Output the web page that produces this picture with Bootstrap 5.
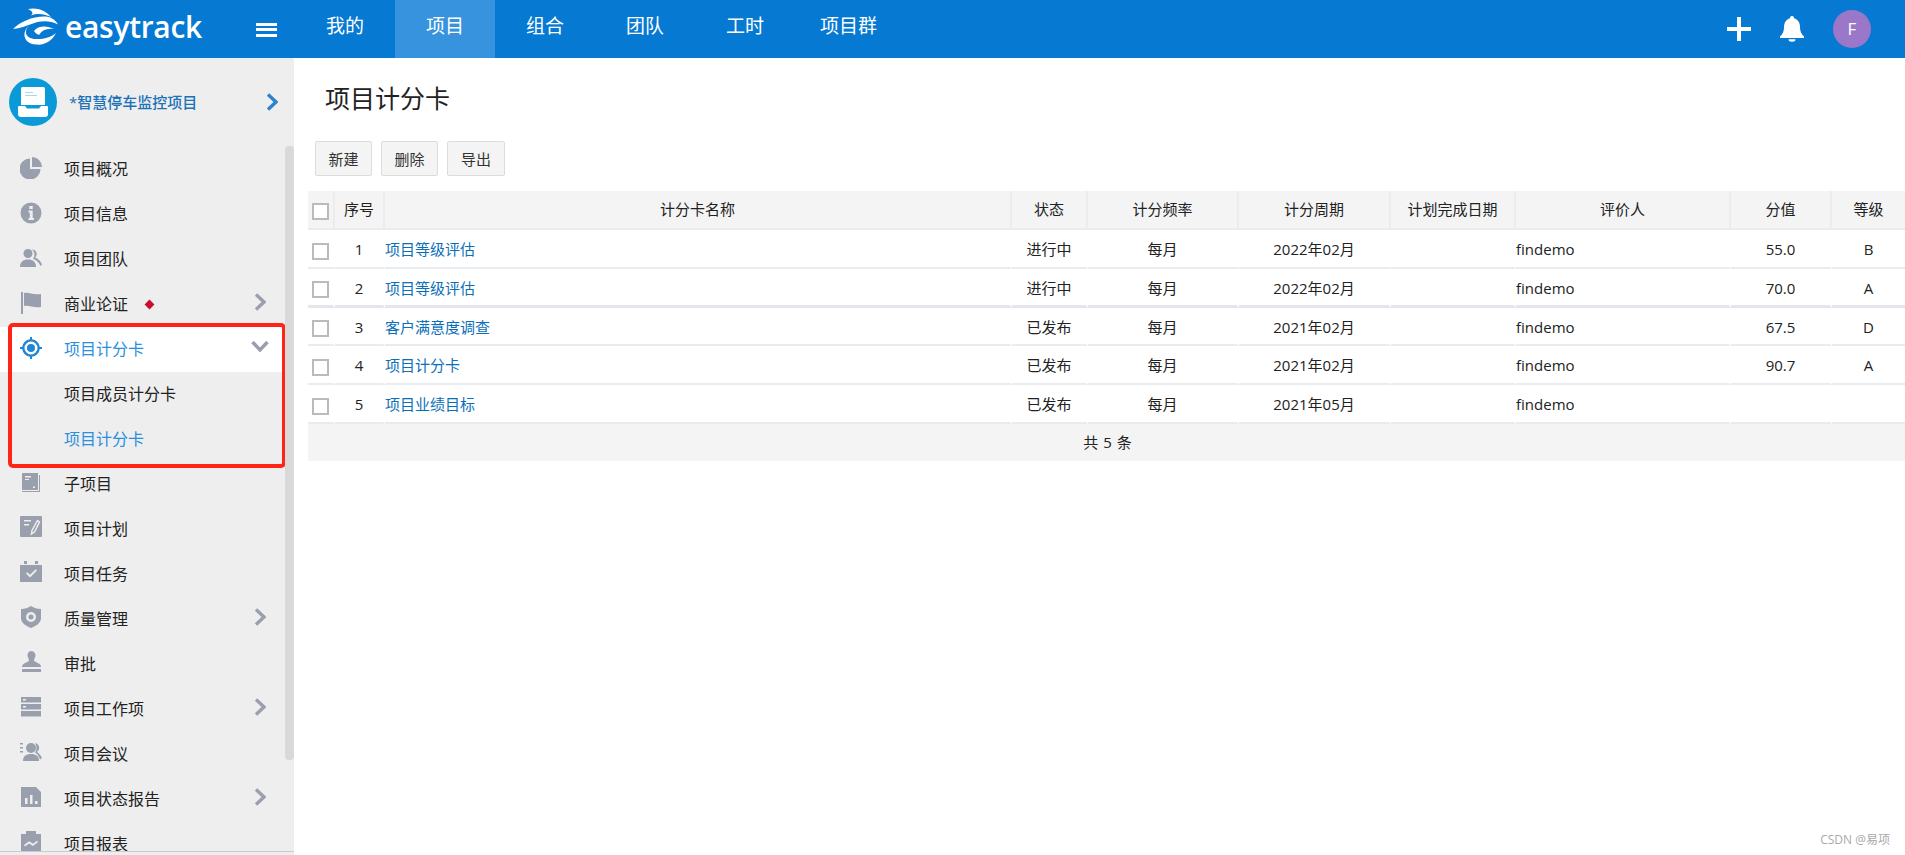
<!DOCTYPE html>
<html lang="zh-CN">
<head>
<meta charset="utf-8">
<title>项目计分卡</title>
<link href="https://cdn.jsdelivr.net/npm/bootstrap@5.3.0/dist/css/bootstrap.min.css" rel="stylesheet">
<style>
html,body{height:855px;overflow:hidden}
body{font-family:"Open Sans","Noto Sans CJK SC",sans-serif;color:#222;background:#fff;font-size:15px}
.et-top{height:58px;background:#0679d3}
.et-logo{width:256px;height:58px;color:#fff}
.et-word{font-family:"Open Sans",sans-serif;font-size:30px;font-weight:600;letter-spacing:-.3px;line-height:58px;margin-left:1px;margin-top:-5px}
.et-burger{width:21px;height:14px;border-top:3px solid #fff;border-bottom:3px solid #fff;position:relative;margin-right:18px;margin-top:1px}
.et-burger::after{content:"";position:absolute;left:0;right:0;top:2.5px;height:3px;background:#fff}
.et-nav a{display:block;width:100px;height:58px;line-height:53px;text-align:center;color:#fff;font-size:19px;text-decoration:none}
.et-nav a.on{background:#3793dd}
.et-nav li:last-child a{width:107px}
.et-plus{width:24px;height:24px;fill:#fff}
.et-bell{width:24px;height:26px;fill:#fff;margin-left:29px}
.et-ava{width:38px;height:38px;border-radius:50%;background:#9b77c9;color:#fff;font-size:17px;margin:0 34px 0 29px}
.et-main{height:797px}
.et-side{width:294px;background:#eee;padding-bottom:3px;position:relative}
.et-menu{overflow:hidden;border-bottom:1px solid #c5ccd5;flex:1 1 auto;min-height:0}
.et-proj{height:89px;padding-left:9px}
.et-proj-c{width:48px;height:48px;border-radius:50%;background:#0a9ad8;margin-top:-2px}
.et-proj-t{font-size:15px;font-weight:500;color:#1a72b8;margin-left:12px;margin-top:-1px;width:197px}
.et-row{height:44.95px;padding-left:20px;padding-right:28px;color:#222;font-size:16px;text-decoration:none}
.et-row svg.ic{width:22px;height:22px;fill:#9a9fae;margin-right:22px;flex:none;margin-top:-3px}
.et-row.sub{padding-left:64px}
.et-row.act{background:#fff;color:#2a8fdc}
.et-row.act svg.ic{fill:#1f86d8}
.et-row.cur{color:#2a8fdc}
.et-chev{width:12px;height:18px;fill:none;stroke:#9a9fae;stroke-width:3.4;margin-left:auto;margin-top:-4px}
.et-chev.pj{stroke:#2e84cc;margin-left:0;margin-top:-2px}
.et-chevd{width:18px;height:12px;fill:none;stroke:#9a9fae;stroke-width:3.4;margin-left:auto;margin-right:-3px;margin-top:-6px}
.et-dia{width:7px;height:7px;background:#c8102e;transform:rotate(45deg);margin-left:18px}
.et-group{position:relative}
.et-redbox{position:absolute;left:8px;right:8px;top:-4px;bottom:-6px;border:4px solid #ff2415;border-radius:5px;pointer-events:none}
.et-thumb{position:absolute;left:285px;top:88px;width:9px;height:614px;border-radius:4px;background:#d9d9d9}
.et-body{min-width:0;padding-left:14px;position:relative}
.et-title{font-size:25px;font-weight:400;color:#222;margin:0;padding:23px 0 0 17px;height:83px;line-height:34px}
.et-btns{padding-left:7px;gap:9px;height:50px}
.et-btn{height:35px;width:57px;padding:0;font-size:15px;line-height:32px;background:#f4f4f4;border:1px solid #dcdcdc;border-radius:2px;color:#333}
.et-btn.wide{width:58px}
.et-t{table-layout:fixed;width:1597px;margin:0;border-collapse:separate;border-spacing:0;font-size:15px;--bs-table-bg:transparent}
.et-t th,.et-t td{padding:0;vertical-align:middle;text-align:center;white-space:nowrap;border-bottom:2px solid #eaebef;color:#222;box-shadow:none}
.et-t th{height:39px;background:#f4f4f4;font-weight:400;border-right:2px solid #ebecf0}
.et-t th:last-child{border-right:0}
.et-t td{height:39px;padding-top:2px;border-right:2px solid transparent}
.et-t td:last-child{border-right:0}
.et-t .lf{text-align:left}
.et-t a{color:#0b6fb8;text-decoration:none}
.et-t tr.thick td{border-bottom:3px solid #e5e6ec}
.et-t tr.sh td{height:38px}
.et-t tfoot td{height:37px;background:#f4f4f4;border:0;padding:0 0 0 2px;word-spacing:1px}
.et-cb{display:block;width:17px;height:17px;border:2px solid #bbb;background:#fff;margin:3px 0 0 4px}
.et-mark{position:absolute;right:15px;bottom:8px;font-size:12px;color:#aaa;line-height:14px}
</style>
</head>
<body>
<header class="et-top d-flex align-items-center text-white">
  <div class="et-logo d-flex align-items-center">
    <svg width="64" height="58" viewBox="0 0 64 58" fill="#fff">
      <path d="M28 9C36 7 46 10 51 17C44 14 38 13 31 15.500C34 13 32 11 28 9Z"/>
      <path d="M13 29C20 22 32 16.500 44 16.500C50 16.500 55 19 58 24.500C50 20.500 41 20.500 33 23.500C26 26 20 28.500 13 29Z"/>
      <path d="M30 24.500C23 31 25 39 37 39C45 39 51 37 56 33C52 41 45 45.500 36 44.500C23 43.500 21 32 30 24.500Z"/>
      <path d="M34 31C38 25.500 47 25.500 54 29C47 28 42 30 39 35C37 34 35 33 34 31Z"/>
    </svg>
    <span class="et-word">easytrack</span>
  </div>
  <div class="et-burger"></div>
  <ul class="et-nav nav">
    <li><a href="#">我的</a></li>
    <li><a href="#" class="on">项目</a></li>
    <li><a href="#">组合</a></li>
    <li><a href="#">团队</a></li>
    <li><a href="#">工时</a></li>
    <li><a href="#">项目群</a></li>
  </ul>
  <div class="ms-auto d-flex align-items-center">
    <svg class="et-plus" viewBox="0 0 24 24"><rect x="10" y="0" width="4" height="24"/><rect x="0" y="10" width="24" height="4"/></svg>
    <svg class="et-bell" viewBox="0 0 24 26"><path d="M12 0a2 2 0 0 1 2 2.200C18 3.200 20 7 20 11c0 4 1 7 4 9.500V22H0v-1.500C3 18 4 15 4 11c0-4 2-7.800 6-8.800A2 2 0 0 1 12 0Z"/><path d="M8.500 23.300h7a3.500 2.500 0 0 1-7 0Z"/></svg>
    <div class="et-ava d-flex align-items-center justify-content-center">F</div>
  </div>
</header>
<div class="et-main d-flex">
  <aside class="et-side d-flex flex-column flex-shrink-0">
    <div class="et-menu">
      <div class="et-proj d-flex align-items-center">
        <div class="et-proj-c d-flex align-items-center justify-content-center flex-shrink-0">
          <svg width="30" height="30" viewBox="0 0 30 30" fill="#fff"><path d="M3 1.500Q3 0 4.500 0h21Q27 0 27 1.500V18H3Z"/><path d="M0 20q0-1 1-1h6l2 2.500h12l2-2.500h6q1 0 1 1v7q0 3-3 3H3q-3 0-3-3Z"/><rect x="7" y="5" width="8" height="1" fill="#a8d8f0"/><rect x="7" y="8" width="12" height="1" fill="#a8d8f0"/></svg>
        </div>
        <div class="et-proj-t">*智慧停车监控项目</div>
        <svg class="et-chev pj" viewBox="0 0 12 18"><path d="M2 1.500 10 9l-8 7.500"/></svg>
      </div>
      <a class="et-row d-flex align-items-center" href="#"><svg class="ic" viewBox="0 0 22 22"><path d="M10 1.500v10.500h10.500A10.500 10.500 0 1 1 10 1.500Z"/><path d="M12 0a10 10 0 0 1 10 10H12Z"/></svg>项目概况</a>
      <a class="et-row d-flex align-items-center" href="#"><svg class="ic" viewBox="0 0 22 22"><path fill-rule="evenodd" d="M11 .500a10.500 10.500 0 1 0 0 21 10.500 10.500 0 0 0 0-21ZM9.300 4h3.400v3H9.300ZM8.500 8.500h4.200V16H14v2H8.500v-2h1.300v-5.500H8.500Z"/></svg>项目信息</a>
      <a class="et-row d-flex align-items-center" href="#"><svg class="ic" viewBox="0 0 22 22"><circle cx="8" cy="6.500" r="4.500"/><path d="M0 20c0-5 3-7.500 8-7.500s8 2.500 8 7.500Z"/><path d="M12 2.500a4.500 4.500 0 0 1 3 8c3 1 6 4 7 7l-1.500 1.500c-1-3-4-6-7.500-7.500 2-2.500 2-6-1-9Z"/></svg>项目团队</a>
      <a class="et-row d-flex align-items-center" href="#"><svg class="ic" viewBox="0 0 22 22"><rect x="1" y="0" width="2" height="22"/><path d="M4 1c5-1 8 2 17 1v13c-8 1-12-2-17-1Z"/></svg>商业论证<span class="et-dia"></span><svg class="et-chev" viewBox="0 0 12 18"><path d="M2 1.500 10 9l-8 7.500"/></svg></a>
      <div class="et-group">
        <a class="et-row act d-flex align-items-center" href="#"><svg class="ic" viewBox="0 0 22 22"><path fill-rule="evenodd" d="M10 0h2v2.200A9 9 0 0 1 19.800 10H22v2h-2.200A9 9 0 0 1 12 19.800V22h-2v-2.200A9 9 0 0 1 2.200 12H0v-2h2.200A9 9 0 0 1 10 2.200ZM11 4.500a6.500 6.500 0 1 0 0 13 6.500 6.500 0 0 0 0-13Z"/><circle cx="11" cy="11" r="4"/></svg>项目计分卡<svg class="et-chevd" viewBox="0 0 18 12"><path d="M1.500 2 9 10l7.500-8"/></svg></a>
        <a class="et-row sub d-flex align-items-center" href="#">项目成员计分卡</a>
        <a class="et-row sub cur d-flex align-items-center" href="#">项目计分卡</a>
        <div class="et-redbox"></div>
      </div>
      <a class="et-row d-flex align-items-center" href="#"><svg class="ic" viewBox="0 0 22 22"><path fill-rule="evenodd" d="M2 1h16v17H2ZM5 4v1.500h6V4Zm0 3v1h4V7Zm10 7.500h-2V16h2Z"/><path d="M19 3h1v17H2v-1h17Z"/></svg>子项目</a>
      <a class="et-row d-flex align-items-center" href="#"><svg class="ic" viewBox="0 0 22 22"><path fill-rule="evenodd" d="M1 0q-1 0-1 1v19q0 1 1 1h20q1 0 1-1V1q0-1-1-1ZM4 4h7v1.500H4Zm0 4h5v1.500H4Z"/><path d="M17.500 4.500 19.500 6 14.500 16 11.500 18 12 14.500Z" fill="none" stroke="#eee" stroke-width="1.500"/></svg>项目计划</a>
      <a class="et-row d-flex align-items-center" href="#"><svg class="ic" viewBox="0 0 22 22"><rect x="4" y="0" width="3" height="3"/><rect x="15" y="0" width="3" height="3"/><path fill-rule="evenodd" d="M0 4h22v17H0Zm6 8.500 4 4 7-7-1.300-1.300L10 13.800l-2.700-2.600Z"/></svg>项目任务</a>
      <a class="et-row d-flex align-items-center" href="#"><svg class="ic" viewBox="0 0 22 22"><path fill-rule="evenodd" d="M11 0c3 2 6 3 10 3v9c0 5-5 8-10 10C6 20 1 17 1 12V3c4 0 7-1 10-3Zm0 6a5 5 0 1 0 0 10 5 5 0 0 0 0-10Zm0 2.500a2.500 2.500 0 1 1 0 5 2.500 2.500 0 0 1 0-5Z"/></svg>质量管理<svg class="et-chev" viewBox="0 0 12 18"><path d="M2 1.500 10 9l-8 7.500"/></svg></a>
      <a class="et-row d-flex align-items-center" href="#"><svg class="ic" viewBox="0 0 22 22"><path d="M11 0a4.500 4.500 0 0 1 4.500 4.500c0 2-1.500 3-1.500 5 0 1.500 6 2.500 7 5.500v1H2v-1c1-3 7-4 7-5.500 0-2-1.500-3-1.500-5A4.500 4.500 0 0 1 11 0Z"/><rect x="2" y="18" width="19" height="3"/></svg>审批</a>
      <a class="et-row d-flex align-items-center" href="#"><svg class="ic" viewBox="0 0 22 22"><path fill-rule="evenodd" d="M1 1h20v5.500H1ZM1 8h20v5.500H1Zm0 7h20v5.500H1ZM3 3v1.500h3V3Zm0 7v1.500h3V10Z"/></svg>项目工作项<svg class="et-chev" viewBox="0 0 12 18"><path d="M2 1.500 10 9l-8 7.500"/></svg></a>
      <a class="et-row d-flex align-items-center" href="#"><svg class="ic" viewBox="0 0 22 22"><circle cx="11" cy="7" r="5"/><path d="M3 20c0-5 3-7 8-7s8 2 8 7Z"/><path d="M15 2a5 5 0 0 1 2 9c2 1 4 4 5 6l-2 1.500c-1-3-3-6-5-7 2-3 2-6 0-9.500Z"/><rect x="0" y="2" width="3" height="1.500"/><rect x="0" y="6" width="3" height="1.500"/><rect x="0" y="10" width="3" height="1.500"/></svg>项目会议</a>
      <a class="et-row d-flex align-items-center" href="#"><svg class="ic" viewBox="0 0 22 22"><path fill-rule="evenodd" d="M1 1h15l5 5v15H1ZM5 12v6h2.500v-6Zm5-3v9h2.500V9Zm5 6v3h2.500v-3Z"/></svg>项目状态报告<svg class="et-chev" viewBox="0 0 12 18"><path d="M2 1.500 10 9l-8 7.500"/></svg></a>
      <a class="et-row d-flex align-items-center" href="#"><svg class="ic" viewBox="0 0 22 22"><path fill-rule="evenodd" d="M1 3h5V0h10v3h5v19H1Zm3 11 1 1.500 4-3 4 2.500 5-4-1-1.300-4 3-4-2.500Z"/></svg>项目报表</a>
    </div>
    <div class="et-thumb"></div>
  </aside>
  <main class="et-body flex-grow-1">
    <h1 class="et-title">项目计分卡</h1>
    <div class="et-btns d-flex align-items-start">
      <button type="button" class="et-btn btn">新建</button>
      <button type="button" class="et-btn btn">删除</button>
      <button type="button" class="et-btn btn wide">导出</button>
    </div>
    <table class="et-t table">
      <colgroup><col style="width:27px"><col style="width:50px"><col style="width:627px"><col style="width:76px"><col style="width:151px"><col style="width:152px"><col style="width:125px"><col style="width:215px"><col style="width:101px"><col></colgroup>
      <thead><tr><th><span class="et-cb"></span></th><th>序号</th><th>计分卡名称</th><th>状态</th><th>计分频率</th><th>计分周期</th><th>计划完成日期</th><th>评价人</th><th>分值</th><th>等级</th></tr></thead>
      <tbody>
        <tr><td><span class="et-cb"></span></td><td>1</td><td class="lf"><a href="#">项目等级评估</a></td><td>进行中</td><td>每月</td><td>2022年02月</td><td></td><td class="lf">findemo</td><td>55.0</td><td>B</td></tr>
        <tr class="thick"><td><span class="et-cb"></span></td><td>2</td><td class="lf"><a href="#">项目等级评估</a></td><td>进行中</td><td>每月</td><td>2022年02月</td><td></td><td class="lf">findemo</td><td>70.0</td><td>A</td></tr>
        <tr class="sh"><td><span class="et-cb"></span></td><td>3</td><td class="lf"><a href="#">客户满意度调查</a></td><td>已发布</td><td>每月</td><td>2021年02月</td><td></td><td class="lf">findemo</td><td>67.5</td><td>D</td></tr>
        <tr><td><span class="et-cb"></span></td><td>4</td><td class="lf"><a href="#">项目计分卡</a></td><td>已发布</td><td>每月</td><td>2021年02月</td><td></td><td class="lf">findemo</td><td>90.7</td><td>A</td></tr>
        <tr><td><span class="et-cb"></span></td><td>5</td><td class="lf"><a href="#">项目业绩目标</a></td><td>已发布</td><td>每月</td><td>2021年05月</td><td></td><td class="lf">findemo</td><td></td><td></td></tr>
      </tbody>
      <tfoot><tr><td colspan="10">共 5 条</td></tr></tfoot>
    </table>
    <div class="et-mark">CSDN @易项</div>
  </main>
</div>
<script src="https://cdn.jsdelivr.net/npm/bootstrap@5.3.0/dist/js/bootstrap.bundle.min.js"></script>
</body>
</html>
